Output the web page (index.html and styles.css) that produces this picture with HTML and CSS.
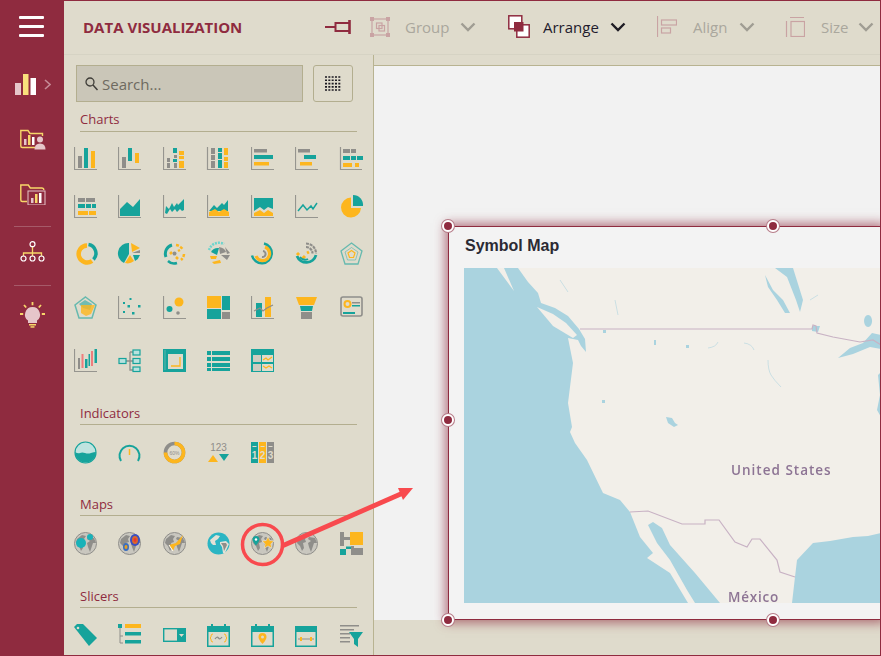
FILE: index.html
```html
<!DOCTYPE html>
<html lang="en">
<head>
<meta charset="utf-8">
<title>Data Visualization</title>
<link rel="stylesheet" href="styles.css">
</head>
<body>
<svg class="defs" width="0" height="0" aria-hidden="true">
  <symbol id="axis" viewBox="0 0 23 23"><path class="sa" d="M.5 0V22.5H23"/></symbol>
  <symbol id="globe" viewBox="0 0 23 23">
    <circle cx="11.5" cy="11.5" r="11" fill="#c9c7bf" stroke="#8f8e8a"/>
    <path class="g" d="M3 7 8 3l4 1-2 3 1 3-3 1 1 5-2 3-2-5-3-3zM14 5l6 1 2 5-3 0-1 3-2 6-2-5-1-4 3-2-3-2z"/>
  </symbol>
</svg>
<div class="app">
  <nav class="rail">
    <button class="burger" type="button" aria-label="Menu"><span></span><span></span><span></span></button>
    <div class="rail-icons first">
      <div class="rail-item bars">
        <svg width="21" height="21" viewBox="0 0 21 21"><rect x="0" y="9" width="6" height="12" fill="#e6c6ca"/><rect x="8" y="0" width="5.500" height="21" fill="#f9e07c"/><rect x="15.500" y="4" width="5.500" height="17" fill="#fff"/></svg>
        <svg class="bars-chevron" width="7" height="11" viewBox="0 0 7 11"><path d="M1 1l5 4.500-5 4.500" fill="none" stroke="#c58a96" stroke-width="1.600"/></svg>
      </div>
      <div class="rail-item shift">
        <svg width="26" height="21" viewBox="0 0 26 21"><path d="M.8 17V1.500H8l2 3h12.500V7M.8 17q0 1.500 1.500 1.500H15" fill="none" stroke="#f7d769" stroke-width="1.400"/><rect x="4" y="10" width="2.500" height="6" fill="#e6c6ca"/><rect x="8" y="6" width="2.500" height="10" fill="#f7d769"/><rect x="12" y="8" width="2.500" height="8" fill="#fff"/><circle cx="20" cy="10.500" r="3" fill="#e6c6ca"/><path d="M14.500 20.500q0-6 5.500-6t5.500 6z" fill="#e6c6ca"/></svg>
      </div>
      <div class="rail-item shift">
        <svg width="26" height="21" viewBox="0 0 26 21"><path d="M.8 16V1h7.500l2 3h11.500q2 0 2 2M.8 16q0 1.500 1.500 1.500H7" fill="none" stroke="#f7d769" stroke-width="1.400"/><rect x="8" y="7" width="17" height="14" fill="none" stroke="#e6c6ca"/><rect x="11" y="14" width="2.500" height="5" fill="#e6c6ca"/><rect x="15" y="10" width="2.500" height="9" fill="#f7d769"/><rect x="19" y="9" width="2.500" height="10" fill="#fff"/></svg>
      </div>
    </div>
    <hr class="rail-line">
    <div class="rail-item org">
      <svg width="25" height="21" viewBox="0 0 25 21"><path d="M12.500 6v10M3.500 16v-4h18v4" fill="none" stroke="#f7d769" stroke-width="1.300"/><g fill="#8f2b3f" stroke="#fff" stroke-width="1.200"><circle cx="12.500" cy="3.200" r="2.500"/><circle cx="3.500" cy="17.500" r="2.500"/><circle cx="12.500" cy="17.500" r="2.500"/><circle cx="21.500" cy="17.500" r="2.500"/></g></svg>
    </div>
    <hr class="rail-line">
    <div class="rail-item bulb">
      <svg width="25" height="26" viewBox="0 0 25 26"><path d="M12.500 5a7.500 7.500 0 0 0-4.500 13.500V21h9v-2.500A7.500 7.500 0 0 0 12.500 5z" fill="#e6c6ca"/><rect x="9" y="22" width="7" height="1.500" fill="#f7d769"/><rect x="10.500" y="24.200" width="4" height="1.500" fill="#f7d769"/><path d="M12.500 0v3.200M4 3l2.200 2.500M21 3l-2.200 2.500M0 12h3.200M21.800 12H25" stroke="#f7d769" stroke-width="1.800"/></svg>
    </div>
  </nav>

  <div class="main">
    <header class="toolbar">
      <h1 class="title">DATA VISUALIZATION</h1>
      <svg class="pin" width="26" height="14" viewBox="0 0 26 14"><path d="M0 7h10M10.500 2v10M10.500 3h14M10.500 11h14" stroke="#8f2b3f" stroke-width="2" fill="none"/><path d="M24.500 0v14" stroke="#8f2b3f" stroke-width="2.600" fill="none"/></svg>
      <div class="tool off group">
        <svg width="20" height="20" viewBox="0 0 20 20"><rect x="2" y="2" width="16" height="16" class="tb"/><rect x="6.500" y="6" width="5.500" height="5.500" class="tb"/><rect x="9" y="8.500" width="5.500" height="5.500" class="tb"/><path class="tf" d="M0 0h4v4H0zM16 0h4v4h-4zM0 16h4v4H0zM16 16h4v4h-4z"/></svg>
        <span class="tool-label">Group</span>
        <svg class="chev" width="16" height="10" viewBox="0 0 16 10"><path d="M1.500 1.500 8 8l6.500-6.500" fill="none" stroke-width="2.400"/></svg>
      </div>
      <div class="tool arrange">
        <svg width="22" height="23" viewBox="0 0 22 23"><rect x=".8" y=".8" width="13" height="13" fill="#fff" stroke="#8f2b3f" stroke-width="1.500"/><rect x="8.800" y="9.800" width="12.400" height="12.400" fill="#fff" stroke="#8f2b3f" stroke-width="1.500"/><rect x="6" y="7" width="9.500" height="9.500" fill="#8f2b3f"/></svg>
        <span class="tool-label">Arrange</span>
        <svg class="chev" width="16" height="10" viewBox="0 0 16 10"><path d="M1.500 1.500 8 8l6.500-6.500" fill="none" stroke-width="2.400"/></svg>
      </div>
      <div class="tool off align">
        <svg width="20" height="21" viewBox="0 0 20 21"><path class="tb" d="M.5 0v21"/><rect x="4.500" y="4" width="15" height="5" class="tb"/><rect x="4.500" y="12" width="9" height="5" class="tb"/></svg>
        <span class="tool-label">Align</span>
        <svg class="chev" width="16" height="10" viewBox="0 0 16 10"><path d="M1.500 1.500 8 8l6.500-6.500" fill="none" stroke-width="2.400"/></svg>
      </div>
      <div class="tool off size">
        <svg width="20" height="21" viewBox="0 0 20 21"><rect x="6" y="5.500" width="13.500" height="15" class="tb"/><path class="tb" d="M1.500 5v16M5 1.500h14"/></svg>
        <span class="tool-label">Size</span>
        <svg class="chev" width="16" height="10" viewBox="0 0 16 10"><path d="M1.500 1.500 8 8l6.500-6.500" fill="none" stroke-width="2.400"/></svg>
      </div>
    </header>

    <div class="work">
      <aside class="panel">
        <div class="search-row">
          <label class="search">
            <svg width="13" height="14" viewBox="0 0 13 14"><circle cx="5" cy="5" r="4" fill="none" stroke="#3f3d38" stroke-width="1.300"/><path d="M8 8l4.500 5" stroke="#3f3d38" stroke-width="1.500"/></svg>
            <span>Search...</span>
          </label>
          <button class="grid-btn" type="button" aria-label="Grid">
            <svg width="16" height="15" viewBox="0 0 16 15"><path d="M0 1h16M0 4.300h16M0 7.600h16M0 10.900h16M0 14h16" stroke="#1c1a22" stroke-width="1.600" stroke-dasharray="2 1.330"/></svg>
          </button>
        </div>

        <section class="section">
          <h2>Charts</h2>
          <div class="icons charts">
            <svg viewBox="0 0 23 23"><use href="#axis"/><rect class="g" x="4" y="9" width="4" height="12"/><rect class="t" x="10" y="1" width="4" height="20"/><rect class="y" x="17" y="4" width="4" height="17"/></svg>
            <svg viewBox="0 0 23 23"><use href="#axis"/><rect class="g" x="4" y="10" width="4" height="11"/><rect class="t" x="10" y="1" width="4" height="13"/><rect class="y" x="17" y="6" width="4" height="10"/></svg>
            <svg viewBox="0 0 23 23"><use href="#axis"/><path class="g" d="M4 11h3v4H4zM4 16h3v5H4zM11 8h3v3h-3zM11 16h3v5h-3z"/><path class="t" d="M10 1h4v5h-4zM10 12h4v3h-4z"/><path class="y" d="M16 4h5v4h-5zM16 9h5v3h-5zM16 14h5v7h-5z"/></svg>
            <svg viewBox="0 0 23 23"><path class="sa" d="M.5 0V22.500H22"/><path class="g" d="M4 1h4v6H4zM4 8h4v5H4zM4 14h4v7H4z"/><path class="t" d="M11 1h4v4h-4zM11 6h4v6h-4zM11 13h4v8h-4z"/><path class="y" d="M17 1h4v7h-4zM17 10h4v4h-4zM17 15h4v6h-4z"/></svg>
            <svg viewBox="0 0 23 23"><use href="#axis"/><rect class="g" x="3" y="2" width="13" height="3.500"/><rect class="t" x="3" y="8" width="19" height="4"/><rect class="y" x="3" y="15" width="15" height="3.500"/></svg>
            <svg viewBox="0 0 23 23"><use href="#axis"/><rect class="g" x="3" y="2" width="12" height="3.500"/><rect class="t" x="9" y="8" width="12" height="4"/><rect class="y" x="5" y="15" width="12" height="3.500"/></svg>
            <svg viewBox="0 0 23 23"><path class="sa" d="M.5 0V22.500H22"/><path class="g" d="M3 2h7v4H3zM11 2h5v4h-5z"/><path class="t" d="M3 9h7v4H3zM11 9h5v4h-5zM17 9h6v4h-6z"/><path class="y" d="M3 16h9v4H3zM15 16h4v4h-4z"/></svg>

            <svg viewBox="0 0 23 23"><use href="#axis"/><path class="g" d="M4 3h7v4H4zM12 3h9v4h-9z"/><path class="t" d="M4 9h7v4H4zM12 9h5v4h-5zM18 9h4v4h-4z"/><path class="y" d="M4 16h10v4H4zM15 16h7v4h-7z"/></svg>
            <svg viewBox="0 0 23 23"><use href="#axis"/><path class="t" d="M2 21v-7l7-7 6 5 7-8v17z"/></svg>
            <svg viewBox="0 0 23 23"><use href="#axis"/><path class="t" d="M2 18l1-7 3 3 3-6 2 4 3-4 1 2 6-6v11l-2 1-2-2-3 3-2-3-3 3-2-3-3 5z"/></svg>
            <svg viewBox="0 0 23 23"><use href="#axis"/><path class="t" d="M2 16l5-6 3 3 5-5 2 2 4-5v11H2z"/><path class="y" d="M2 21v-4l6-3 4 3 5-3 5 3v4z"/></svg>
            <svg viewBox="0 0 23 23"><use href="#axis"/><path class="t" d="M3 3h19v11l-5-2-4 3-4-3-6 4z"/><path class="y" d="M3 21v-3l6-3 4 3 4-3 5 3v3z"/></svg>
            <svg viewBox="0 0 23 23"><use href="#axis"/><path class="st" d="M3 16l5-6 4 5 4-4 2 3 4-6" stroke-width="1.500"/></svg>
            <svg viewBox="0 0 23 23"><path class="y" d="M11 2.500a10 10 0 1 0 10 10.500H11z"/><path class="t" d="M13 0a10 10 0 0 1 10 11H13z"/></svg>

            <svg viewBox="0 0 23 23"><path class="sy" d="M13 3.500A8.500 8.500 0 1 0 18 19" stroke-width="4.500"/><path class="st" d="M14.500 2.500a9 9 0 0 1 5 15" stroke-width="3.500"/></svg>
            <svg viewBox="0 0 23 23"><path class="t" d="M11 1a10.500 10.500 0 0 0-5 20l5-9z"/><path class="y" d="M13 1l9 5-8 4zM7 21l5-8 4 6a10 10 0 0 1-9 2z"/><path class="t" d="M15 13h7a10 10 0 0 1-5 6z"/><path class="g" d="M14 11l8-3v3z"/></svg>
            <svg viewBox="0 0 23 23"><path class="st" d="M3 15A9 9 0 0 1 9 3" stroke-width="3"/><path class="sy" d="M13 3a9 9 0 0 1 7 5M21 12a9 9 0 0 1-3 6" stroke-width="2.500" stroke-dasharray="3 1.500"/><path class="st" d="M14 21a9 9 0 0 1-9-2" stroke-width="2.500"/><path class="sy" d="M9 10l-2 2M13 15l2 2M15 9l2-1" stroke-width="2.500"/><circle class="g" cx="11.500" cy="11.500" r="2"/></svg>
            <svg viewBox="0 0 23 23"><path fill="none" stroke="#6dd5cd" stroke-width="2.500" stroke-dasharray="2 1" d="M2 8A10.500 10.500 0 0 1 17 2"/><path class="t" d="M4 10a8 8 0 0 1 8-4l-2 7z"/><path class="y" d="M3 14h7l-1 3-5 0zM5 20l8-2 1 3-7 1z"/><path class="g" d="M12 5q6 1 7 5l-6 2zM18 5l5 6-3 1zM14 13h9l-3 5z"/></svg>
            <svg viewBox="0 0 23 23"><path class="st" d="M13 1.500a10 10 0 1 1-12 12" stroke-width="2.500"/><path class="sy" d="M14 5a7 7 0 1 1-9 9" stroke-width="3.200"/><path class="sg" d="M12 9a3 3 0 1 1-1 6" stroke-width="2"/></svg>
            <svg viewBox="0 0 23 23"><path class="sg" d="M11 1.500a10 10 0 0 1 10 10M11 5a6.500 6.500 0 0 1 6.500 6.500" stroke-width="2.200" stroke-dasharray="3 .8"/><path class="st" d="M2 14a10 10 0 0 0 19-1" stroke-width="2.800"/><path class="sy" d="M2 11l2 2M7 17l3-3M12 11l2-1" stroke-width="3"/><path class="st" d="M5 15a6 6 0 0 0 8 2" stroke-width="2"/></svg>
            <svg viewBox="0 0 23 23"><path class="st soft" d="M11.500 1 22 9l-4 13H5L1 9z" stroke-width="1.300"/><path class="st soft" d="M11.500 5.500 18 10l-2.500 8h-8L5 10z" stroke-width=".7"/><path class="sy" d="M11.500 8.500 15 11l-1.500 4.500h-4L8 11z" stroke-width="1.200"/></svg>

            <svg viewBox="0 0 23 23"><path class="st soft" d="M11.500 1 22 9l-4 13H5L1 9z" stroke-width="1.500"/><path class="t" opacity=".55" d="M11 4 18 8l-2 6-7-2-4-4z"/><path class="y" opacity=".8" d="M7 9l14 0-4 9-5 2-5-3z"/></svg>
            <svg viewBox="0 0 23 23"><use href="#axis"/><path class="t" d="M11.500 2h2v2h-2zM5 6h2v2H5zM9.500 9h2.500v2.500H9.500zM20 9h2.500v2.500H20zM5 15h2v2H5zM14 16h2.500v2.500H14z"/></svg>
            <svg viewBox="0 0 23 23"><use href="#axis"/><circle class="y" cx="16" cy="6" r="4.500"/><circle class="t" cx="6.500" cy="13" r="3"/><circle class="g" cx="15" cy="17" r="1.800"/></svg>
            <svg viewBox="0 0 23 23"><path class="y" d="M0 0h14v12H0z"/><path class="t" d="M15 0h8v14h-8zM0 13h14v10H0z"/><path class="g" d="M15 16h8v7h-8z"/></svg>
            <svg viewBox="0 0 23 23"><use href="#axis"/><path class="t" d="M5 7h6v14H5z"/><path class="y" d="M14 1h6v20h-6z"/><path class="sg" d="M3 15l6-3 3 3 4-3 6-3" stroke-width="1.300"/></svg>
            <svg viewBox="0 0 23 23"><path class="y" d="M1 1h21l-3 8H4z"/><path class="t" d="M5 10h13l-1 5H6z"/><path class="g" d="M6 16h11v7H6z"/></svg>
            <svg viewBox="0 0 23 23"><rect x="1" y="1" width="21" height="19" rx="2" fill="none" stroke="#8f8e8a" stroke-width="1.600"/><circle class="sy" cx="7.500" cy="8" r="3" stroke-width="2"/><path class="g" d="M12 6h8v1.500h-8z"/><path class="t" d="M12 9h8v1.500h-8zM3 16h12v2H3z"/></svg>

            <svg viewBox="0 0 23 23"><use href="#axis"/><path class="g" d="M4 9h2v11H4z"/><path fill="#ef7d7d" d="M7.500 5h2v14h-2zM19 2h-2v15h2z"/><path class="t" d="M11 10h2.500v9H11zM14.500 5h1.500v12h-1.500zM20.500 0H23v14h-2.500z"/></svg>
            <svg viewBox="0 0 23 23"><path class="sg" d="M8 12h4M12 3v18h3M12 3h3M12 12h3" stroke-width="1.300"/><rect class="nb" x="1" y="9.500" width="7" height="5"/><rect class="nb" x="15" y="1" width="7" height="5"/><rect class="nb" x="15" y="9.500" width="7" height="5"/><rect class="nb" x="15" y="18" width="7" height="4.500"/></svg>
            <svg viewBox="0 0 23 23"><path class="t" d="M0 0h23v23H0zM5 5v15h15V5z"/><path class="sy" d="M8 17h9V8" stroke-width="1.300"/><path fill="#dfdbcc" d="M1.500 1h1v20h-1z" opacity=".35"/></svg>
            <svg viewBox="0 0 23 23"><path class="t" d="M0 2h4v4H0zM5 2h18v4H5zM0 8h4v4H0zM5 8h18v4H5zM0 14h4v4H0zM5 14h18v4H5zM0 19h4v3H0zM5 19h18v3H5z"/></svg>
            <svg viewBox="0 0 23 23"><path class="t" d="M0 0h23v23H0z"/><rect x="2" y="6" width="8" height="7" fill="#cfccc0"/><rect x="2" y="15" width="8" height="7" fill="#cfccc0"/><rect x="11" y="6" width="11" height="7" fill="#dfdbcc"/><rect x="11" y="15" width="11" height="7" fill="#dfdbcc"/><path class="sy" d="M12 11l3-2 2 2 4-3M12 17l3 2 3-2 3 2" stroke-width="1.200"/></svg>
          </div>
        </section>

        <section class="section indicators">
          <h2>Indicators</h2>
          <div class="icons">
            <svg viewBox="0 0 23 23"><circle cx="11.500" cy="11.500" r="10.500" fill="#bfe3df" stroke="#16a39b" stroke-width="1.200"/><path class="t" d="M1 11q3 2 5 1t5 0 6 0 5-1a10.500 10.500 0 0 1-21 0z"/></svg>
            <svg viewBox="0 0 23 23"><path class="st" d="M3 20A10 10 0 1 1 20 20" stroke-width="2"/><path class="sy" d="M11.500 8v6" stroke-width="1.500"/></svg>
            <svg viewBox="0 0 23 23"><circle class="sg" cx="11.500" cy="11.500" r="9" stroke-width="3.600"/><path class="sy" d="M11.500 2.500a9 9 0 1 1-9 9" stroke-width="3.600"/><text class="tiny" x="11.500" y="13.500" text-anchor="middle">60%</text></svg>
            <svg viewBox="0 0 23 23"><text class="nums" x="11.500" y="9.500" text-anchor="middle">123</text><path class="y" d="M1 21l5-7 5 7z"/><path class="t" d="M12 13h10l-5 7z"/></svg>
            <svg viewBox="0 0 23 23"><path class="t" d="M0 1h7v21H0z"/><path class="y" d="M8 1h7v21H8z"/><path class="g" d="M16 1h7v21h-7z"/><path fill="#dfdbcc" d="M1.500 5h4v1h-4zM9.500 5h4v1h-4zM17.500 5h4v1h-4z"/><text class="cell" x="3.500" y="18" text-anchor="middle">1</text><text class="cell" x="11.500" y="18" text-anchor="middle">2</text><text class="cell" x="19.500" y="18" text-anchor="middle">3</text></svg>
          </div>
        </section>

        <section class="section maps">
          <h2>Maps</h2>
          <div class="icons">
            <svg viewBox="0 0 23 23"><use href="#globe"/><circle cx="7" cy="11" r="5" fill="#19b2b8"/><circle cx="16" cy="5" r="3" fill="#19b2b8"/></svg>
            <svg viewBox="0 0 23 23"><use href="#globe"/><ellipse cx="17" cy="8" rx="5" ry="6" fill="#3b4fc0"/><ellipse cx="17" cy="8" rx="3" ry="4" fill="#d96a2a"/><ellipse cx="17" cy="8" rx="1.500" ry="2" fill="#e33"/><ellipse cx="8" cy="15" rx="3" ry="4" fill="#3b6fc0"/><ellipse cx="8" cy="15" rx="1.500" ry="2" fill="#e8a020"/></svg>
            <svg viewBox="0 0 23 23"><use href="#globe"/><path class="y" d="M6 13l7-2 7-8-3 9-5 2-2 5z"/><path d="M6 13l4 6" stroke="#fff" stroke-width="1"/></svg>
            <svg viewBox="0 0 23 23"><circle cx="11.500" cy="11.500" r="11" fill="#2bb5c3"/><path fill="#e3e1d6" d="M3 8l6-5 4 1-2 3-3 2 1 4-3 0-2-2zM13 10l6-1 3 3-4 9-2 0-1-6-2-3z"/><path class="g" d="M14 11l5 0 1 2-3 6-1-5z"/></svg>
            <svg viewBox="0 0 23 23"><use href="#globe"/><path class="t" d="M5 4a3.500 3.500 0 0 1 3.500 3.500c0 2-3.500 6-3.500 6s-3.500-4-3.500-6A3.500 3.500 0 0 1 5 4z"/><circle cx="5" cy="7.500" r="1.200" fill="#fff"/><path class="y stroke-w" d="M17 4.500l1.800 4 4.200.5-3.100 2.900.9 4.300L17 14l-3.800 2.200.9-4.300L11 9l4.200-.5z"/></svg>
            <svg viewBox="0 0 23 23"><use href="#globe"/></svg>
            <svg viewBox="0 0 23 23"><path class="g" d="M0 0h4v14H0zM4 5h8v3H4zM11 14h3v9h-3zM14 16h9v7h-9z"/><path class="y" d="M10 0h13v13H10z"/><path class="t" d="M0 17h6v6H0zM6 14.500h5v2.500H6z"/></svg>
          </div>
        </section>

        <section class="section slicers">
          <h2>Slicers</h2>
          <div class="icons">
            <svg viewBox="0 0 23 23"><path class="t" d="M0 3l3-3h6l14 14-8 8z"/><circle cx="4" cy="4" r="1.300" fill="#dfdbcc"/></svg>
            <svg viewBox="0 0 23 23"><path class="sg" d="M2 4v15h3M2 12h3"/><path class="t" d="M0 0h4v4H0zM7 8h16v3.500H7zM7 16h16v3.500H7z" /><path class="y" d="M7 0h16v4H7zM0 0" /></svg>
            <svg viewBox="0 0 23 23"><rect class="nb2" x=".7" y="4.700" width="21.600" height="12.600"/><rect class="t" x="14" y="4" width="9" height="14"/><path d="M16 10h5l-2.500 3z" fill="#dfdbcc"/></svg>
            <svg viewBox="0 0 23 23"><path class="t" d="M0 2h4V0h2v2h11V0h2v2h4v21H0z"/><rect x="1.500" y="8" width="20" height="13.500" fill="#dfdbcc"/><path class="sy" d="M6 10q-2 0-2 2v1l-1 1 1 1v1q0 2 2 2M17 10q2 0 2 2v1l1 1-1 1v1q0 2-2 2" stroke-width="1"/><path class="sg" d="M8 15q2-3 3.500-1t3.500-1" stroke-width="1.300"/></svg>
            <svg viewBox="0 0 23 23"><path class="t" d="M0 2h4V0h2v2h11V0h2v2h4v21H0z"/><rect x="1.500" y="8" width="20" height="13.500" fill="#dfdbcc"/><path class="y" d="M11.500 9a4 4 0 0 1 4 4c0 3-4 7-4 7s-4-4-4-7a4 4 0 0 1 4-4z"/><circle cx="11.500" cy="13" r="1.500" fill="#dfdbcc"/></svg>
            <svg viewBox="0 0 23 23"><path class="t" d="M0 2h22v21H0z"/><rect x="1.500" y="8" width="19" height="13.500" fill="#dfdbcc"/><path class="sg" d="M3 15h16" stroke-width="1"/><path class="y" d="M5 13h2v4H5zM15 13h2v4h-2z"/></svg>
            <svg viewBox="0 0 23 23"><path class="g" d="M0 1h19v1.500H0zM0 5h14v1.500H0zM0 9h10v1.500H0zM0 13h10v1.500H0zM0 17h10v1.500H0z"/><path class="t" d="M9 8h14l-5 7v8l-4-3v-5z"/></svg>
          </div>
        </section>
      </aside>

      <main class="stage">
        <div class="canvas"></div>
        <article class="widget">
          <h3 class="widget-title">Symbol Map</h3>
          <div class="map-wrap">
            <svg class="map" width="417" height="335" viewBox="464 268 417 335">
              <rect x="464" y="268" width="417" height="335" fill="#f2efe9"/>
              <g class="water">
                <path d="M464 268H497L514 291 504 268H518L528 282 538 293 541 303 555 308 568 316 579 329 585 339 586 352 581 346 578 340 568 338 573 363 568 403 572 427 570 432 575 443 587 460 603 493 620 500 630 512 640 537 653 553 647 558 670 573 688 603H464Z"/>
                <path d="M653 522 648 525 657 543 670 560 687 590 695 603H720L695 573 670 545 662 528Z"/>
                <path d="M792 603 795 577 797 560 813 543 830 541 853 537 868 536 881 533V603Z"/>
                <path d="M775 268H793L803 300 800 312 796 300 787 277ZM765 275 773 290 783 300 790 313 785 313 777 300 768 287Z"/>
                <path d="M838 358 850 348 863 343 872 333 881 335V349L870 347 853 354ZM878 375 881 372V417L877 410 880 395ZM868 315a4 6 0 1 0 .1 0ZM812 326h8l-2 6-6-1Z"/>
                <path d="M666 417l6 1 3 5 3 2-4 2-6-4zM654 340h2v5h-2zM602 400h3v3h-3zM603 330h3v3h-3zM686 345h3v3h-3z"/>
                <path d="M708 348q8-1 10-6M744 343q8 1 10 7M768 360q0 10 3 15t10 12M810 300l8-5M615 300l3 15M560 280l8 12" fill="none" stroke="#aad3df" stroke-width=".8" opacity=".7"/>
              </g>
              <path class="island" d="M537 307 553 314 566 323 577 335 573 338 553 326Z"/>
              <path class="border" d="M580 329H812L813 325 816 326 817 333 833 337 860 342 873 340 881 345M630 512 648 511 682 524H705V520H719L735 542 747 547 752 539H760L777 560 780 572 795 577"/>
              <text class="map-label" x="731" y="475">United States</text>
              <text class="map-label mx" x="728" y="602">México</text>
            </svg>
          </div>
          <span class="handle h-tl"></span><span class="handle h-tc"></span><span class="handle h-ml"></span><span class="handle h-bl"></span><span class="handle h-bc"></span>
        </article>
      </main>
    </div>
  </div>

  <svg class="note" width="881" height="656" viewBox="0 0 881 656" aria-hidden="true">
    <circle cx="262.500" cy="544.500" r="20" fill="none" stroke="#f84a4e" stroke-width="3.500"/>
    <path d="M282 546 403 493" stroke="#f84a4e" stroke-width="4.800" fill="none"/>
    <path d="M413 488 398 488 403 500Z" fill="#f84a4e"/>
  </svg>
</div>
</body>
</html>
```

FILE: styles.css
```css
* { box-sizing: border-box; }
html, body { margin: 0; padding: 0; height: 100%; }
body { font-family: "Open Sans", sans-serif; overflow: hidden; background: #dfdbcc; }
.defs { position: absolute; }
.app { position: relative; display: flex; width: 881px; height: 656px; border-top: 1px solid #8f2b3f; border-bottom: 1px solid #8f2b3f; border-right: 1px solid #8f2b3f; overflow: hidden; }

.rail { width: 64px; flex: none; background: #8f2b3f; display: flex; flex-direction: column; align-items: center; }
.burger { background: none; border: 0; padding: 0; margin-top: 15px; width: 26px; height: 39px; display: flex; flex-direction: column; gap: 6.500px; }
.burger span { display: block; width: 25px; height: 2.500px; background: #fff; border-radius: 1px; }
.rail-line { width: 37px; height: 1px; margin: 0; border: 0; background: #a65a69; }
.rail-icons { margin-top: 19px; display: flex; flex-direction: column; gap: 34px; align-items: center; height: 152px; }
.rail-item { display: flex; align-items: center; height: 21px; }
.bars { margin-left: 2px; gap: 8px; }
.shift { margin-left: 1px; }
.org { margin-top: 14px; height: 44px; align-items: flex-start; }
.bulb { margin-top: 16px; height: 26px; }

.main { flex: 1; min-width: 0; display: flex; flex-direction: column; }
.toolbar { height: 54px; flex: none; display: flex; align-items: center; padding: 0 0 2px 19px; border-bottom: 1px solid #d6d3c4; }
.title { margin: 0; width: 158px; font-size: 15px; font-weight: 700; color: #8f2b3f; white-space: nowrap; }
.pin { margin-left: 84px; flex: none; }
.tool { display: flex; align-items: center; color: #1f1c2c; flex: none; }
.tool-label { font-size: 15px; }
.tool > svg:first-child { flex: none; }
.chev { stroke: #1f1c24; flex: none; }
.off { color: #aaa79d; }
.off .chev { stroke: #a09d93; }
.tb { fill: none; stroke: #c9a3a3; stroke-width: 1.200; }
.tf { fill: #c9a3a3; }
.group { margin-left: 19px; }
.group .tool-label { margin-left: 15px; width: 55px; }
.arrange { margin-left: 32px; }
.arrange .tool-label { margin-left: 13px; width: 67px; }
.align { margin-left: 31px; }
.align .tool-label { margin-left: 16px; width: 46px; }
.size { margin-left: 30px; }
.size .tool-label { margin-left: 16px; width: 37px; }

.work { flex: 1; display: flex; min-height: 0; }
.panel { width: 310px; flex: none; padding: 10px 0 0 10px; border-right: 1px solid #b8b391; background: #dfdbcc; position: relative; }
.search-row { display: flex; gap: 10px; margin-left: 2px; }
.search { width: 227px; height: 37px; background: #cac6b8; border: 1px solid #b3ae8f; display: flex; align-items: center; gap: 4px; padding-left: 8px; color: #6e6a60; font-size: 15px; }
.grid-btn { width: 40px; height: 37px; padding: 0; background: #dfdbcc; border: 1px solid #b3ae8f; border-radius: 3px; display: flex; align-items: center; justify-content: center; }

.section { margin-top: 10px; }
.section h2 { margin: 0 0 15px 6px; width: 277px; height: 20px; font-size: 13px; line-height: 14px; font-weight: 400; color: #8f2b3f; border-bottom: 1px solid #b3ae8f; }
.indicators { margin-top: 33px; }
.maps { margin-top: 32px; }
.slicers { margin-top: 33px; }
.indicators h2, .maps h2, .slicers h2 { margin-bottom: 16px; line-height: 16px; }
.icons { display: grid; grid-template-columns: repeat(7, 44.300px); grid-auto-rows: 23px; }
.icons svg { width: 23px; height: 23px; display: block; overflow: visible; }
.charts { grid-template-rows: 48px 47px 54px 53px 23px; }

.g { fill: #8f8e8a; }
.t { fill: #16a39b; }
.y { fill: #fdb61e; }
.sa { fill: none; stroke: #96958f; stroke-width: 1.200; }
.sg { fill: none; stroke: #8f8e8a; }
.st { fill: none; stroke: #16a39b; }
.sy { fill: none; stroke: #fdb61e; }
.soft { opacity: .6; }
.nb { fill: #b7e2de; stroke: #16a39b; stroke-width: 1.200; }
.nb2 { fill: #dfdbcc; stroke: #16a39b; stroke-width: 1.400; }
.stroke-w { stroke: #dfdbcc; stroke-width: .8; }
.tiny { font-family: "Liberation Sans", sans-serif; font-size: 5px; fill: #8f8e8a; }
.nums { font-family: "Liberation Sans", sans-serif; font-size: 10px; fill: #8f8e8a; }
.cell { font-family: "Liberation Sans", sans-serif; font-size: 10px; font-weight: 700; fill: #dfdbcc; }

.stage { flex: 1; position: relative; min-width: 0; padding-top: 10px; padding-bottom: 35px; display: flex; }
.canvas { flex: 1; background: #f2f2f2; border-top: 1px solid #b8b391; }
.widget { position: absolute; left: 74px; top: 171px; width: 434px; height: 394px; background: #f3f3f3; border: 1px solid #8f2b3f; border-right: 0; box-shadow: 0 0 10px 3px rgba(143, 43, 63, .62); padding: 0 0 0 15px; display: flex; flex-direction: column; }
.widget-title { margin: 10px 0 0 1px; height: 31px; font: 700 16px/18px "Liberation Sans", sans-serif; color: #2b2a33; }
.map-wrap { height: 335px; width: 417px; }
.map { display: block; filter: blur(.4px); }
.water { fill: #aad3df; }
.island { fill: #f2efe9; }
.border { fill: none; stroke: #c8b2c4; stroke-width: 1.200; }
.map-label { font: 600 13.500px "Open Sans", sans-serif; letter-spacing: 1px; fill: #8d7494; paint-order: stroke; stroke: #f2efe9; stroke-width: 1.500px; }
.mx { letter-spacing: .8px; }
.handle { position: absolute; width: 12px; height: 12px; border-radius: 50%; background: #8f2b3f; border: 2px solid #fff; box-shadow: 0 0 0 1px #b67c88; }
.h-tl { left: -7px; top: -7px; }
.h-tc { left: 318px; top: -7px; }
.h-ml { left: -7px; top: 187px; }
.h-bl { left: -7px; top: 387px; }
.h-bc { left: 318px; top: 387px; }

.note { position: absolute; left: 0; top: -1px; pointer-events: none; }
```
